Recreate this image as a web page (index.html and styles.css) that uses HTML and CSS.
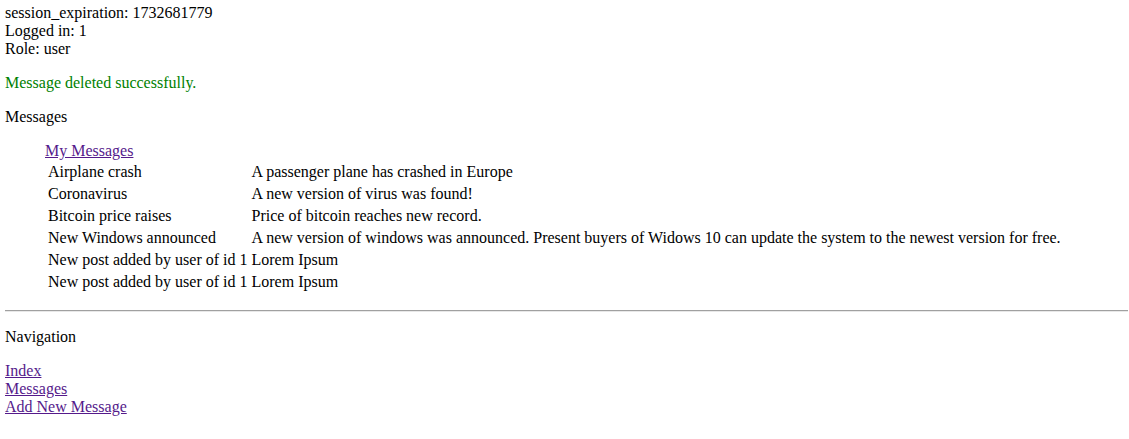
FILE: index.html
```html
<!DOCTYPE html>
<html>
<head>
<meta charset="utf-8">
<link rel="stylesheet" href="styles.css">
</head>
<body>
<div class="session">session_expiration: 1732681779<br>Logged in: 1<br>Role: user</div>
<p class="success">Message deleted successfully.</p>
<p>Messages</p>
<div class="messages">
  <a href="#" class="link">My Messages</a>
  <table class="msg-table">
    <tr><td>Airplane crash</td><td>A passenger plane has crashed in Europe</td></tr>
    <tr><td>Coronavirus</td><td>A new version of virus was found!</td></tr>
    <tr><td>Bitcoin price raises</td><td>Price of bitcoin reaches new record.</td></tr>
    <tr><td>New Windows announced</td><td>A new version of windows was announced. Present buyers of Widows 10 can update the system to the newest version for free.</td></tr>
    <tr><td>New post added by user of id 1</td><td>Lorem Ipsum</td></tr>
    <tr><td>New post added by user of id 1</td><td>Lorem Ipsum</td></tr>
  </table>
</div>
<hr class="divider">
<p>Navigation</p>
<div class="nav">
  <a href="#" class="link">Index</a><br>
  <a href="#" class="link">Messages</a><br>
  <a href="#" class="link">Add New Message</a>
</div>
</body>
</html>
```
FILE: styles.css
```css
html, body {
  background: #fff;
}
body {
  margin: 4px 1px 8px 5px;
  font-family: "Liberation Serif", "Times New Roman", serif;
  font-size: 16px;
  color: #000;
}
p {
  margin: 16px 0;
}
.success {
  color: #008000;
}
.messages {
  margin: 16px 0 16px 40px;
}
.link {
  color: #551a8b;
  text-decoration: underline;
}
.msg-table {
  border-spacing: 2px;
  border-collapse: separate;
}
.msg-table td {
  padding: 1px;
  white-space: nowrap;
}
.divider {
  margin: 7px 0 8px;
  height: 0;
  border-style: solid;
  border-width: 1px 0;
  border-top-color: #a0a0a0;
  border-bottom-color: #e8e8e8;
}
```
